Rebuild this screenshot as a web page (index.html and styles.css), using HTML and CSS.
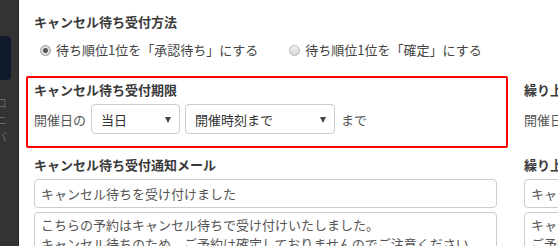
FILE: index.html
```html
<!DOCTYPE html>
<html lang="ja">

<head>
    <meta charset="UTF-8">
    <meta name="viewport" content="width=device-width, initial-scale=1.0">
    <title>キャンセル待ち設定</title>
    <link rel="stylesheet" href="styles.css">
</head>

<body>

    <aside class="sidebar">
        <div class="sidebar-logo"></div>
        <ul class="sidebar-menu">
            <li>ロ</li>
            <li>ニ</li>
            <li>バ</li>
        </ul>
    </aside>

    <main class="content">
        <div class="section">
            <div class="section-title">キャンセル待ち受付方法</div>
            <div class="radio-row">
                <label class="radio"><input type="radio" name="method" checked>待ち順位1位を「承認待ち」にする</label>
                <label class="radio"><input type="radio" name="method">待ち順位1位を「確定」にする</label>
            </div>
        </div>

        <div class="columns">
            <div class="section highlight">
                <div class="section-title">キャンセル待ち受付期限</div>
                <div class="select-row">
                    <span class="label">開催日の</span>
                    <div class="select-box short">
                        <select>
                            <option>当日</option>
                            <option>前日</option>
                        </select>
                    </div>
                    <div class="select-box long">
                        <select>
                            <option>開催時刻まで</option>
                            <option>終了時刻まで</option>
                        </select>
                    </div>
                    <span class="label">まで</span>
                </div>
            </div>

            <div class="section">
                <div class="section-title">繰り上げ確定期限</div>
                <div class="select-row">
                    <span class="label">開催日の</span>
                    <div class="select-box short">
                        <select>
                            <option>前日</option>
                        </select>
                    </div>
                    <div class="select-box long">
                        <select>
                            <option>開催時刻まで</option>
                        </select>
                    </div>
                    <span class="label">まで</span>
                </div>
            </div>

            <div class="section">
                <div class="section-title">キャンセル待ち受付通知メール</div>
                <input type="text" class="text-input" value="キャンセル待ちを受け付けました">
                <textarea class="text-area">こちらの予約はキャンセル待ちで受け付けいたしました。
キャンセル待ちのため、ご予約は確定しておりませんのでご注意ください。</textarea>
            </div>

            <div class="section">
                <div class="section-title">繰り上げ確定通知メール</div>
                <input type="text" class="text-input" value="キャンセル待ちから予約が確定しました">
                <textarea class="text-area">キャンセル待ちの予約が確定しました。
ご予約内容をご確認ください。</textarea>
            </div>
        </div>
    </main>

</body>

</html>
```

FILE: styles.css
```css
body {
    font-family: 'Noto Sans CJK JP', 'Noto Sans', sans-serif;
    font-size: 13px;
    color: #333;
    background-color: #ffffff;
    display: flex;
    height: 246px;
    margin: 0;
    overflow: hidden;
}

/* Left navigation strip */
.sidebar {
    width: 19px;
    flex-shrink: 0;
    background-color: #333333;
    box-shadow: inset -1px 0 0 #262626;
    padding-top: 36px;
    overflow: hidden;
}

.sidebar-logo {
    width: 11px;
    height: 44px;
    background-color: #0f1b2b;
    border-radius: 0 4px 4px 0;
}

.sidebar-menu {
    list-style: none;
    margin: 14px 0 0 -5px;
    padding: 0;
    color: #666;
    font-size: 12px;
    line-height: 17px;
}

.content {
    flex: 1;
    min-width: 0;
    padding: 8px 0 0 7px;
    overflow: hidden;
}

.section {
    border: 2px solid transparent;
    border-radius: 2px;
    padding: 3px 9px 12px 6px;
    margin-bottom: 3px;
}

.section.highlight {
    border-color: #ff0000;
}

.section-title {
    font-weight: bold;
    color: #3a3a3a;
    line-height: 18px;
    margin-bottom: 5px;
    white-space: nowrap;
}

.radio-row {
    display: flex;
    line-height: 18px;
    padding-top: 5px;
    color: #444;
}

.radio {
    display: flex;
    align-items: center;
    white-space: nowrap;
    margin-left: 6px;
    margin-right: 25px;
}

.radio input {
    appearance: none;
    width: 11px;
    height: 11px;
    margin: 0 5px 0 0;
    border: 1px solid #b5b5b5;
    border-radius: 50%;
    background: linear-gradient(#f2f2f2, #d6d6d6);
}

.radio input:checked {
    background: radial-gradient(circle, #555 0, #555 2px, #e0e0e0 3px, #cfcfcf 100%);
    border-color: #9a9a9a;
}

.columns {
    display: grid;
    grid-template-columns: 482px 482px;
    column-gap: 8px;
}

.select-row {
    display: flex;
    align-items: center;
    gap: 5px;
    white-space: nowrap;
}

.label {
    color: #555;
}

.select-box {
    position: relative;
}

.select-box::after {
    content: '';
    position: absolute;
    right: 9px;
    top: 13px;
    border-left: 3.5px solid transparent;
    border-right: 3.5px solid transparent;
    border-top: 6px solid #444;
    pointer-events: none;
}

.select-box select {
    appearance: none;
    font-family: inherit;
    font-size: 13px;
    color: #333;
    height: 30px;
    padding: 0 20px 0 9px;
    border: 1px solid #cccccc;
    border-radius: 4px;
    background-color: #ffffff;
}

.select-box.short select {
    width: 89px;
}

.select-box.long select {
    width: 150px;
}

.select-row .label:last-child {
    margin-left: 1px;
}

.text-input,
.text-area {
    display: block;
    box-sizing: border-box;
    width: 100%;
    font-family: inherit;
    font-size: 13px;
    color: #555;
    border: 1px solid #cccccc;
    border-radius: 4px;
    padding: 0 6px;
    margin: 0;
    background-color: #ffffff;
}

.text-input {
    height: 29px;
    margin-top: 1px;
}

.text-area {
    margin-top: 4px;
    height: 60px;
    padding-top: 2px;
    line-height: 19px;
    resize: none;
    overflow: hidden;
}
```
